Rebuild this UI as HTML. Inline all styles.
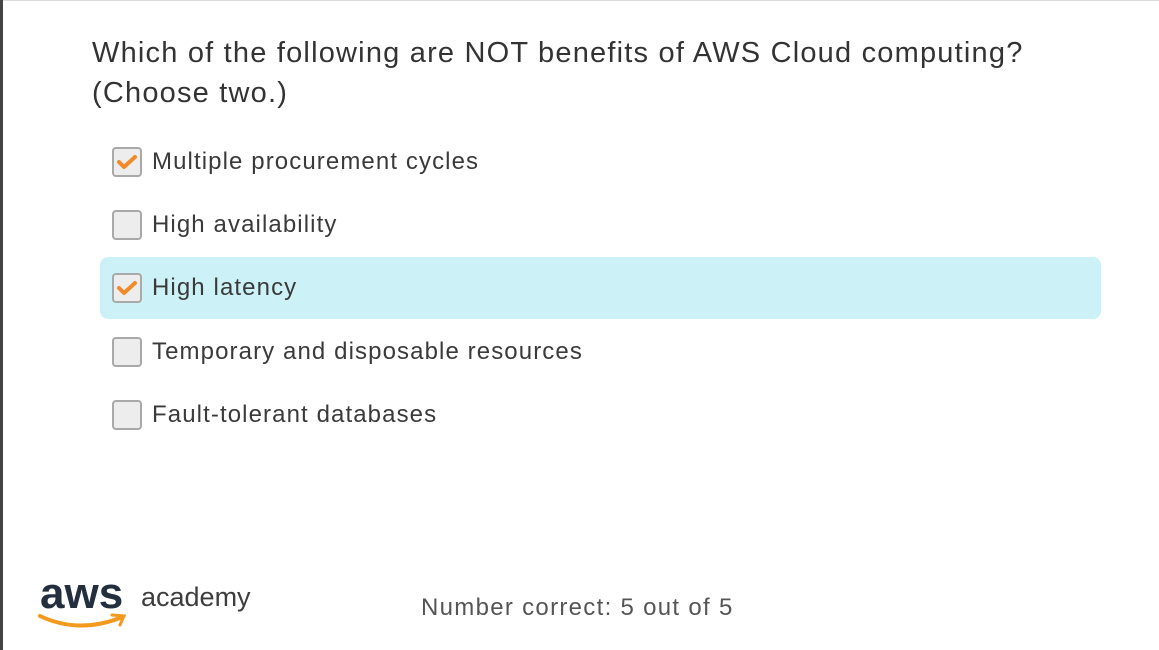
<!DOCTYPE html>
<html><head><style>
body{margin:0;width:1159px;height:650px;background:#fff;position:relative;overflow:hidden;font-family:"Liberation Sans",sans-serif;color:#3a3a3a}
.lb{position:absolute;left:0;top:0;width:3px;height:650px;background:#444}
.tb{position:absolute;left:0;top:0;width:1159px;height:1px;background:#ddd}
.q{position:absolute;left:92px;top:33px;font-size:29px;line-height:40px;color:#333;letter-spacing:1.2px;white-space:nowrap}
.hl{position:absolute;left:100px;top:257px;width:1001px;height:62px;background:#ccf1f7;border-radius:8px}
.o{position:absolute;left:112px;height:32px;display:flex;align-items:center}
.cb{width:30px;height:30px;box-sizing:border-box;border:2px solid #a9a9a9;border-radius:4px;background:#ededed;position:relative}
.o span{margin-left:10px;font-size:24px;color:#3a3a3a;letter-spacing:1.1px}
.logo{position:absolute;left:40px;top:572px}
.nc{position:absolute;left:421px;top:594px;font-size:24px;color:#555;letter-spacing:1.3px}
</style></head><body>
<div class="tb"></div><div class="lb"></div>
<div class="q">Which of the following are NOT benefits of AWS Cloud computing?<br>(Choose two.)</div>
<div class="hl"></div>
<div class="o" style="top:146px"><div class="cb"><svg width="26" height="26" viewBox="0 0 26 26" style="position:absolute;left:0;top:0"><path d="M5 13l5 5 11-10" stroke="#f08a2a" stroke-width="4" fill="none" stroke-linecap="round" stroke-linejoin="round"/></svg></div><span>Multiple procurement cycles</span></div>
<div class="o" style="top:209px"><div class="cb"></div><span>High availability</span></div>
<div class="o" style="top:272px"><div class="cb"><svg width="26" height="26" viewBox="0 0 26 26" style="position:absolute;left:0;top:0"><path d="M5 13l5 5 11-10" stroke="#f08a2a" stroke-width="4" fill="none" stroke-linecap="round" stroke-linejoin="round"/></svg></div><span>High latency</span></div>
<div class="o" style="top:336px"><div class="cb"></div><span>Temporary and disposable resources</span></div>
<div class="o" style="top:399px"><div class="cb"></div><span>Fault-tolerant databases</span></div>
<div class="logo">
<div style="font-size:44px;font-weight:bold;color:#232f3e;line-height:40px;letter-spacing:0px;position:absolute;left:0;top:2px">aws</div>
<svg width="92" height="20" style="position:absolute;left:-2px;top:40px" viewBox="0 0 92 20"><path d="M2 4 Q40 22 82 6" stroke="#f39a1e" stroke-width="4" fill="none" stroke-linecap="round"/><path d="M74 3 L86 4 L82 13" stroke="#f39a1e" stroke-width="3" fill="none" stroke-linecap="round"/></svg>
<div style="position:absolute;left:101px;top:10px;font-size:27px;color:#3d3d3d;white-space:nowrap">academy</div>
</div>
<div class="nc">Number correct: 5 out of 5</div>
</body></html>
